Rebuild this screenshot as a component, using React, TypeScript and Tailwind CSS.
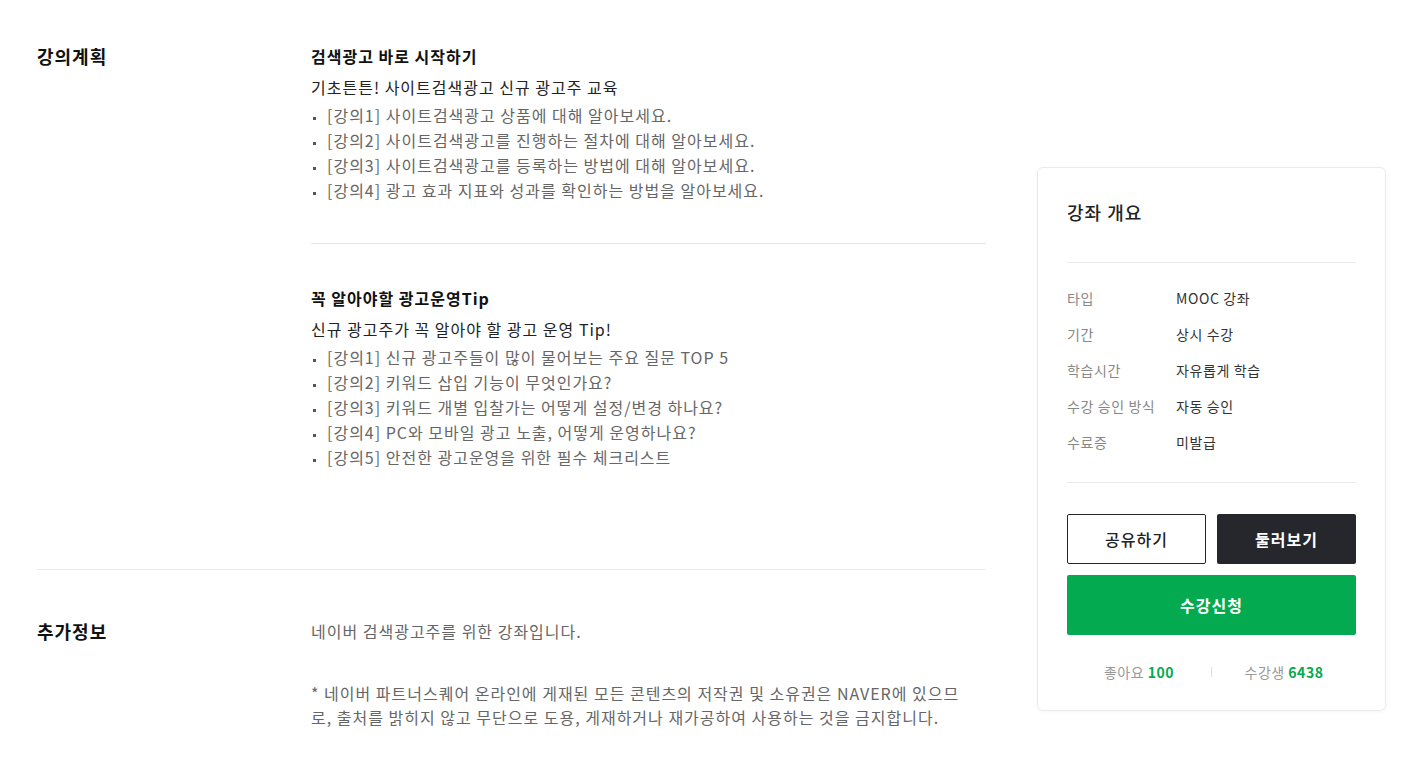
import React from "react";

const font = { fontFamily: '"Noto Sans CJK KR", "Noto Sans", sans-serif' };

interface Block {
  title: string;
  subtitle: string;
  items: string[];
}

const blocks: Block[] = [
  {
    title: "검색광고 바로 시작하기",
    subtitle: "기초튼튼! 사이트검색광고 신규 광고주 교육",
    items: [
      "[강의1] 사이트검색광고 상품에 대해 알아보세요.",
      "[강의2] 사이트검색광고를 진행하는 절차에 대해 알아보세요.",
      "[강의3] 사이트검색광고를 등록하는 방법에 대해 알아보세요.",
      "[강의4] 광고 효과 지표와 성과를 확인하는 방법을 알아보세요.",
    ],
  },
  {
    title: "꼭 알아야할 광고운영Tip",
    subtitle: "신규 광고주가 꼭 알아야 할 광고 운영 Tip!",
    items: [
      "[강의1] 신규 광고주들이 많이 물어보는 주요 질문 TOP 5",
      "[강의2] 키워드 삽입 기능이 무엇인가요?",
      "[강의3] 키워드 개별 입찰가는 어떻게 설정/변경 하나요?",
      "[강의4] PC와 모바일 광고 노출, 어떻게 운영하나요?",
      "[강의5] 안전한 광고운영을 위한 필수 체크리스트",
    ],
  },
];

const overview = [
  { label: "타입", value: "MOOC 강좌" },
  { label: "기간", value: "상시 수강" },
  { label: "학습시간", value: "자유롭게 학습" },
  { label: "수강 승인 방식", value: "자동 승인" },
  { label: "수료증", value: "미발급" },
];

function LectureBlock({ block }: { block: Block }) {
  return (
    <div>
      <h3 className="text-[16px] leading-[24px] font-bold text-[#111] tracking-[1px]">{block.title}</h3>
      <p className="mt-[7px] text-[16px] leading-[24px] text-[#222] tracking-[1px]">{block.subtitle}</p>
      <ul className="mt-[4px]">
        {block.items.map((item) => (
          <li key={item} className="flex items-center text-[16px] leading-[25px] text-[#666] tracking-[1px]">
            <span className="w-[3px] h-[3px] bg-[#555] ml-[2px] mr-[11px] mt-[5px] shrink-0" />
            {item}
          </li>
        ))}
      </ul>
    </div>
  );
}

export default function App() {
  return (
    <div className="bg-white min-h-screen" style={font}>
      <div className="flex pl-[37px] pt-[44px]">
        {/* Left content */}
        <div className="w-[949px]">
          <section className="flex pb-[99px] border-b border-[#ebebeb]">
            <h2 className="w-[274px] text-[18px] leading-[24px] font-bold text-[#111] tracking-[1px]">강의계획</h2>
            <div className="flex-1">
              <LectureBlock block={blocks[0]} />
              <div className="mt-[40px] mb-[42px] border-t border-[#e5e5e5]" />
              <LectureBlock block={blocks[1]} />
            </div>
          </section>

          <section className="flex pt-[49px]">
            <h2 className="w-[274px] text-[18px] leading-[24px] font-bold text-[#111] tracking-[1px]">추가정보</h2>
            <div className="flex-1 text-[16px] text-[#666] tracking-[1px]">
              <p className="leading-[24px]">네이버 검색광고주를 위한 강좌입니다.</p>
              <p className="mt-[38px] leading-[24px]">
                * 네이버 파트너스퀘어 온라인에 게재된 모든 콘텐츠의 저작권 및 소유권은 NAVER에 있으므
                <br />
                로, 출처를 밝히지 않고 무단으로 도용, 게재하거나 재가공하여 사용하는 것을 금지합니다.
              </p>
            </div>
          </section>
        </div>

        {/* Overview card */}
        <aside className="ml-[51px] mt-[123px] w-[349px] self-start border border-[#ebebeb] rounded-[6px] px-[29px] pt-[31px] pb-[28px] shadow-[0_1px_4px_rgba(0,0,0,0.04)]">
          <h3 className="text-[18px] leading-[26px] text-[#222] font-medium tracking-[1px]">강좌 개요</h3>
          <div className="mt-[37px] border-t border-[#ebebeb]" />
          <dl className="mt-[17px]">
            {overview.map((row) => (
              <div key={row.label} className="flex items-center h-[36px] text-[14px] tracking-[0.6px]">
                <dt className="w-[109px] text-[#888]">{row.label}</dt>
                <dd className="text-[#333]">{row.value}</dd>
              </div>
            ))}
          </dl>
          <div className="mt-[22px] border-t border-[#ebebeb]" />
          <div className="mt-[31px] grid grid-cols-2 gap-[11px]">
            <button className="h-[50px] border border-[#25272d] rounded-[2px] bg-white text-[16px] font-medium text-[#222] tracking-[1px]">
              공유하기
            </button>
            <button className="h-[50px] rounded-[2px] bg-[#25272d] text-[16px] font-bold text-white tracking-[1px]">
              둘러보기
            </button>
          </div>
          <button className="mt-[11px] w-full h-[60px] rounded-[2px] bg-[#03aa4f] text-[16px] font-bold text-white tracking-[1px]">
            수강신청
          </button>
          <div className="mt-[27px] flex items-center text-[14px] leading-[20px] tracking-[0.5px]">
            <div className="flex-1 text-center text-[#999]">
              좋아요 <span className="font-bold text-[#03aa4f]">100</span>
            </div>
            <span className="w-px h-[10px] bg-[#ddd]" />
            <div className="flex-1 text-center text-[#999]">
              수강생 <span className="font-bold text-[#03aa4f]">6438</span>
            </div>
          </div>
        </aside>
      </div>
    </div>
  );
}
